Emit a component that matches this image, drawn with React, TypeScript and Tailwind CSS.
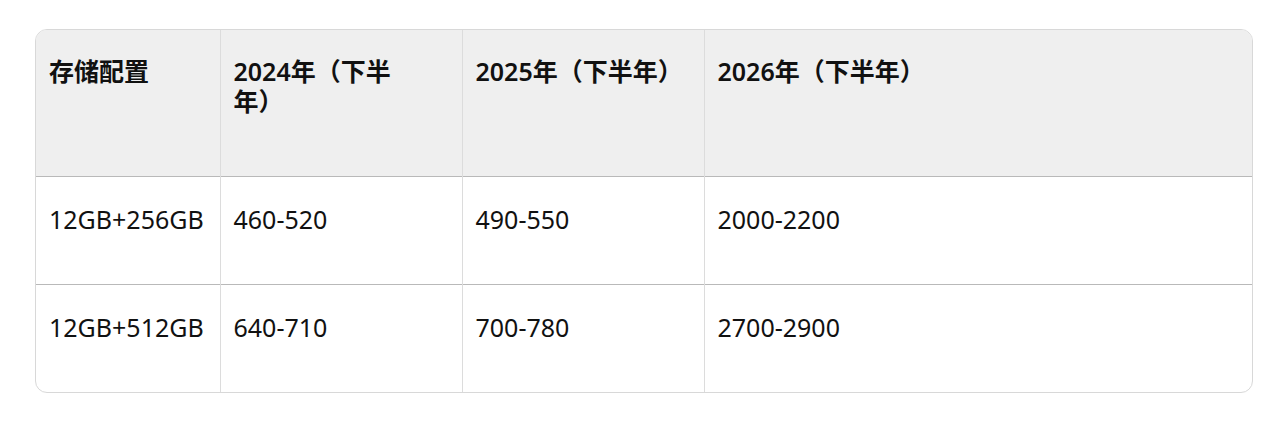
const HEAD = ["存储配置", "2024年（下半\n年）", "2025年（下半年）", "2026年（下半年）"];

const ROWS = [
  ["12GB+256GB", "460-520", "490-550", "2000-2200"],
  ["12GB+512GB", "640-710", "700-780", "2700-2900"],
];

const WIDTHS = ["w-[184px]", "w-[242px]", "w-[242px]", "w-auto"];

export default function App() {
  return (
    <div
      className="min-h-screen bg-white pt-[29px] pl-[35px] pr-[25px] text-[#111]"
      style={{ fontFamily: '"Noto Sans", "Noto Sans CJK SC", sans-serif' }}
    >
      <div className="w-[1218px] overflow-hidden rounded-[12px] border border-[#d8d8d8]">
        <table className="w-full table-fixed border-collapse">
          <colgroup>
            {WIDTHS.map((w, i) => (
              <col key={i} className={w} />
            ))}
          </colgroup>
          <thead>
            <tr className="h-[146px] border-b border-[#b9b9b9] bg-[#efefef]">
              {HEAD.map((h, i) => (
                <th
                  key={i}
                  className="whitespace-pre-line border-l border-[#dcdcdc] pl-[13px] pr-[14px] pt-[26px] text-left align-top text-[25px] font-semibold leading-[30px] first:border-l-0"
                >
                  {h}
                </th>
              ))}
            </tr>
          </thead>
          <tbody>
            {ROWS.map((r, ri) => (
              <tr key={ri} className="h-[108px] border-b border-[#b9b9b9] last:border-b-0">
                {r.map((c, ci) => (
                  <td
                    key={ci}
                    className="border-l border-[#dcdcdc] pl-[13px] pr-[14px] pt-[27px] text-left align-top text-[25px] leading-[30px] first:border-l-0"
                  >
                    {c}
                  </td>
                ))}
              </tr>
            ))}
          </tbody>
        </table>
      </div>
    </div>
  );
}
